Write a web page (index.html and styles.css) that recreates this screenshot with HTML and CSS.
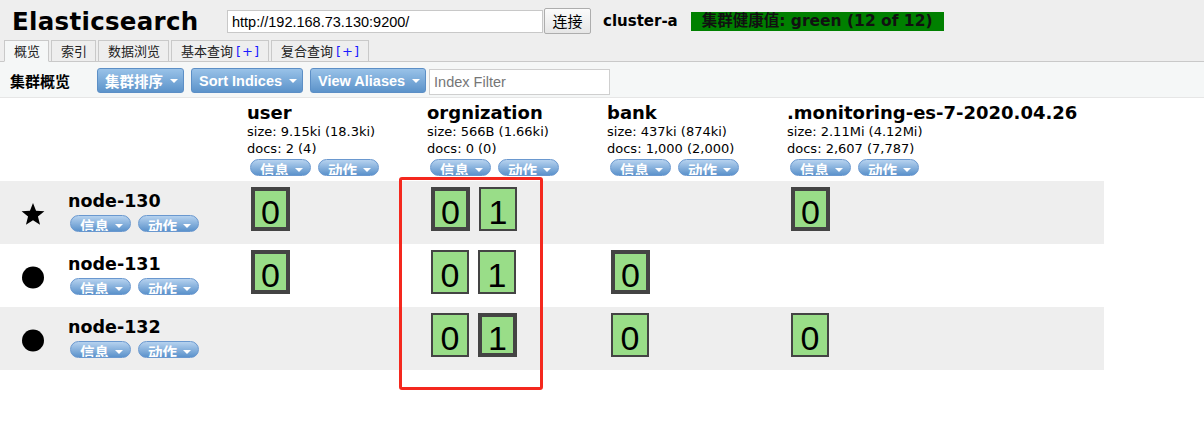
FILE: index.html
```html
<!DOCTYPE html>
<html lang="zh">
<head>
<meta charset="utf-8">
<title>Elasticsearch</title>
<link rel="stylesheet" href="styles.css">
</head>
<body>
<div class="header">
  <h1 class="title">Elasticsearch</h1>
  <input class="url" type="text" value="http://192.168.73.130:9200/">
  <button class="connect">连接</button>
  <span class="cluster">cluster-a</span>
  <span class="health">集群健康值: green (12 of 12)</span>
</div>
<div class="tabs">
  <div class="tab active">概览</div>
  <div class="tab">索引</div>
  <div class="tab">数据浏览</div>
  <div class="tab">基本查询 <span class="plus">[+]</span></div>
  <div class="tab">复合查询 <span class="plus">[+]</span></div>
</div>
<div class="toolbar">
  <span class="tb-label">集群概览</span>
  <button class="btn cjk">集群排序<i class="caret"></i></button>
  <button class="btn">Sort Indices<i class="caret"></i></button>
  <button class="btn">View Aliases<i class="caret"></i></button>
  <input class="filter" type="text" placeholder="Index Filter">
</div>
<div class="overview">
  <div class="row head">
    <div class="cell"></div>
    <div class="cell idx">
      <div class="idx-name">user</div>
      <div class="idx-stat">size: 9.15ki (18.3ki)</div>
      <div class="idx-stat">docs: 2 (4)</div>
      <div class="pills"><span class="pill">信息<i class="caret"></i></span><span class="pill">动作<i class="caret"></i></span></div>
    </div>
    <div class="cell idx">
      <div class="idx-name">orgnization</div>
      <div class="idx-stat">size: 566B (1.66ki)</div>
      <div class="idx-stat">docs: 0 (0)</div>
      <div class="pills"><span class="pill">信息<i class="caret"></i></span><span class="pill">动作<i class="caret"></i></span></div>
    </div>
    <div class="cell idx">
      <div class="idx-name">bank</div>
      <div class="idx-stat">size: 437ki (874ki)</div>
      <div class="idx-stat">docs: 1,000 (2,000)</div>
      <div class="pills"><span class="pill">信息<i class="caret"></i></span><span class="pill">动作<i class="caret"></i></span></div>
    </div>
    <div class="cell idx">
      <div class="idx-name">.monitoring-es-7-2020.04.26</div>
      <div class="idx-stat">size: 2.11Mi (4.12Mi)</div>
      <div class="idx-stat">docs: 2,607 (7,787)</div>
      <div class="pills"><span class="pill">信息<i class="caret"></i></span><span class="pill">动作<i class="caret"></i></span></div>
    </div>
  </div>

  <div class="row node-row alt">
    <div class="cell node">
      <svg class="node-icon" width="24" height="23" viewBox="0 0 24 23"><path d="M12 0 L15.06 7.79 L23.41 8.29 L16.95 13.61 L19.05 21.71 L12 17.2 L4.95 21.71 L7.05 13.61 L0.59 8.29 L8.94 7.79 Z" fill="#000"/></svg>
      <div class="node-info">
        <div class="node-name">node-130</div>
        <div class="pills"><span class="pill">信息<i class="caret"></i></span><span class="pill">动作<i class="caret"></i></span></div>
      </div>
    </div>
    <div class="cell shards"><span class="shard primary">0</span></div>
    <div class="cell shards"><span class="shard primary">0</span><span class="shard">1</span></div>
    <div class="cell shards"></div>
    <div class="cell shards"><span class="shard primary">0</span></div>
  </div>

  <div class="row node-row">
    <div class="cell node">
      <svg class="node-icon" width="24" height="23" viewBox="0 0 24 23"><circle cx="12" cy="11.5" r="11" fill="#000"/></svg>
      <div class="node-info">
        <div class="node-name">node-131</div>
        <div class="pills"><span class="pill">信息<i class="caret"></i></span><span class="pill">动作<i class="caret"></i></span></div>
      </div>
    </div>
    <div class="cell shards"><span class="shard primary">0</span></div>
    <div class="cell shards"><span class="shard">0</span><span class="shard">1</span></div>
    <div class="cell shards"><span class="shard primary">0</span></div>
    <div class="cell shards"></div>
  </div>

  <div class="row node-row alt">
    <div class="cell node">
      <svg class="node-icon" width="24" height="23" viewBox="0 0 24 23"><circle cx="12" cy="11.5" r="11" fill="#000"/></svg>
      <div class="node-info">
        <div class="node-name">node-132</div>
        <div class="pills"><span class="pill">信息<i class="caret"></i></span><span class="pill">动作<i class="caret"></i></span></div>
      </div>
    </div>
    <div class="cell shards"></div>
    <div class="cell shards"><span class="shard">0</span><span class="shard primary">1</span></div>
    <div class="cell shards"><span class="shard">0</span></div>
    <div class="cell shards"><span class="shard">0</span></div>
  </div>
</div>
<div class="annotation"></div>
</body>
</html>
```

FILE: styles.css
```css
* { box-sizing: border-box; }
html, body { margin: 0; padding: 0; }
body {
  background: #fff;
  font-family: "DejaVu Sans", "Noto Sans CJK SC", sans-serif;
  color: #000;
  width: 1204px;
  height: 442px;
  overflow: hidden;
  position: relative;
}

/* header */
.header {
  display: flex;
  align-items: flex-start;
  height: 39px;
  padding-left: 12px;
  background: #eeeeee;
}
.title {
  margin: 8px 0 0 0;
  width: 215px;
  font-size: 24.5px;
  line-height: 28px;
  font-weight: bold;
  letter-spacing: 0.3px;
}
.url {
  margin-top: 10px;
  width: 316px;
  height: 23px;
  border: 1px solid #c8c8c8;
  background: #fff;
  padding: 0 4px;
  font-family: "Liberation Sans", Arial, sans-serif;
  font-size: 14.5px;
  color: #000;
  outline: none;
}
.connect {
  margin: 8px 0 0 1px;
  width: 47px;
  height: 26px;
  padding: 0;
  border: 1px solid #adadad;
  border-radius: 2px;
  background: linear-gradient(#fbfbfb, #e6e6e6);
  font-family: "Noto Sans CJK SC", sans-serif;
  font-size: 15px;
  line-height: 24px;
  color: #000;
}
.cluster {
  margin: 11px 0 0 12px;
  font-size: 15px;
  line-height: 20px;
  font-weight: bold;
}
.health {
  margin: 12px 0 0 13px;
  height: 19px;
  padding: 0 11px;
  background: #008000;
  color: #111;
  font-size: 15.5px;
  line-height: 19px;
  font-weight: bold;
  white-space: nowrap;
}

/* tabs */
.tabs {
  display: flex;
  align-items: flex-end;
  gap: 2px;
  height: 23px;
  padding-left: 4px;
  background: #eeeeee;
  border-bottom: 1px solid #c9c9c9;
}
.tab {
  height: 22px;
  margin-bottom: -1px;
  padding: 0 8px 0 9px;
  border: 1px solid #c9c9c9;
  background: #eeeeee;
  font-family: "Noto Sans CJK SC", sans-serif;
  font-size: 13px;
  line-height: 20px;
  color: #222;
  white-space: nowrap;
}
.tab.active {
  background: #f5f7f7;
  border-bottom-color: #f5f7f7;
}
.plus {
  font-family: "DejaVu Sans", sans-serif;
  font-size: 13px;
  letter-spacing: 1px;
  color: #1a1aff;
}

/* toolbar */
.toolbar {
  display: flex;
  align-items: flex-start;
  height: 36px;
  padding: 6px 0 0 10px;
  background: #f5f7f7;
  border-bottom: 1px solid #e6e6e6;
}
.tb-label {
  font-family: "Noto Sans CJK SC", sans-serif;
  font-size: 15px;
  font-weight: bold;
  line-height: 25px;
  margin-right: 27px;
}
.btn {
  display: inline-flex;
  align-items: center;
  height: 25px;
  margin-right: 7px;
  padding: 0 5px 0 7px;
  border: 1px solid #5c8fc6;
  border-radius: 3px;
  background: linear-gradient(#99c2e8, #5c93ca);
  color: #fff;
  font-family: "Liberation Sans", Arial, sans-serif;
  font-size: 14.5px;
  font-weight: bold;
  white-space: nowrap;
}
.btn.cjk {
  font-family: "Noto Sans CJK SC", sans-serif;
  font-size: 14.5px;
}
.btn .caret { margin-left: 7px; margin-top: 1px; }
.caret {
  display: inline-block;
  width: 0;
  height: 0;
  border-left: 4px solid transparent;
  border-right: 4px solid transparent;
  border-top: 4px solid #fff;
}
.filter {
  margin: 1px 0 0 -4px;
  width: 181px;
  height: 26px;
  border: 1px solid #cfcfcf;
  background: #fff;
  padding: 0 4px;
  font-family: "Liberation Sans", Arial, sans-serif;
  font-size: 14.5px;
  outline: none;
}
.filter::placeholder { color: #767676; }

/* overview table */
.overview { width: 1104px; }
.row {
  display: grid;
  grid-template-columns: 247px 180px 180px 180px 317px;
}
.row.head { height: 83px; }
.node-row { height: 63px; }
.node-row.alt { background: #eeeeee; }

.idx { padding-top: 4px; }
.idx-name {
  font-size: 18px;
  font-weight: bold;
  line-height: 22px;
  white-space: nowrap;
}
.idx-stat {
  font-size: 13px;
  line-height: 16.5px;
  white-space: nowrap;
}
.pills {
  display: flex;
  gap: 7px;
}
.idx .pills { margin: 2px 0 0 3px; }

.pill {
  display: inline-flex;
  align-items: flex-start;
  height: 17px;
  overflow: hidden;
  padding: 2px 7px 0 9px;
  border: 1px solid #6a98cf;
  border-radius: 9px;
  background: linear-gradient(#b6d2ef, #5b92cb);
  color: #fff;
  font-family: "Noto Sans CJK SC", sans-serif;
  font-size: 14.5px;
  font-weight: bold;
  line-height: 15px;
  white-space: nowrap;
}
.pill .caret { margin: 6px 0 0 6px; flex: none; }

.node {
  display: flex;
  align-items: flex-start;
  padding-left: 21px;
}
.node-icon { margin-top: 22px; flex: none; }
.node-info { margin-left: 23px; padding-top: 10px; }
.node-name {
  font-size: 17.5px;
  font-weight: bold;
  line-height: 20px;
}
.node-info .pills { margin: 4px 0 0 2px; }

.shards {
  display: flex;
  align-items: flex-start;
  gap: 9px;
  padding: 6px 0 0 4px;
}
.shard {
  width: 38px;
  height: 44px;
  border: 2px solid #444;
  background: #99dd88;
  font-family: "Liberation Sans", Arial, sans-serif;
  font-size: 34px;
  line-height: 36px;
  padding-top: 5px;
  text-align: center;
  overflow: hidden;
}
.shard.primary {
  width: 39px;
  border-width: 4px;
  padding-top: 3px;
}

/* screenshot annotation overlay */
.annotation {
  position: absolute;
  left: 399px;
  top: 177px;
  width: 144px;
  height: 213px;
  border: 3px solid #f4281e;
  border-radius: 3px;
  pointer-events: none;
}
```
